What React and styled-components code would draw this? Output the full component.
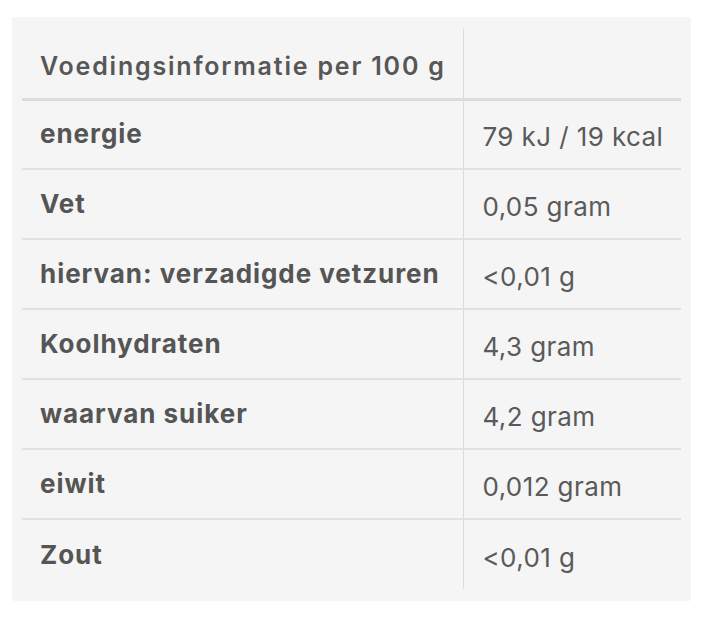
import React from 'react';
import styled, { createGlobalStyle } from 'styled-components';

const GlobalStyle = createGlobalStyle`
  html, body {
    margin: 0;
    padding: 0;
    background: #ffffff;
  }
  body {
    font-family: Inter, "Liberation Sans", Arial, sans-serif;
  }
`;

const rows = [
  ['energie', '79 kJ / 19 kcal'],
  ['Vet', '0,05 gram'],
  ['hiervan: verzadigde vetzuren', '<0,01 g'],
  ['Koolhydraten', '4,3 gram'],
  ['waarvan suiker', '4,2 gram'],
  ['eiwit', '0,012 gram'],
  ['Zout', '<0,01 g'],
];

const Page = styled.div`
  padding: 17px 29px 32px 12px;
`;

const Card = styled.div`
  background: #f5f5f5;
  border-radius: 3px;
  padding: 11px 10px 12px 10px;
`;

const Table = styled.table`
  width: 100%;
  border-collapse: collapse;
  table-layout: fixed;
`;

const HeadCell = styled.th`
  box-sizing: border-box;
  height: 71px;
  padding: 6px 0 0 18px;
  text-align: left;
  font-size: 25px;
  font-weight: 600;
  letter-spacing: 1.8px;
  white-space: nowrap;
  color: #575757;
  border-bottom: 3px solid #dcdcdc;
  border-right: ${p => (p.$divider ? '1px solid #dcdcdc' : 'none')};
  width: ${p => p.$width || 'auto'};
`;

const Row = styled.tr`
  border-bottom: ${p => (p.$last ? 'none' : '2px solid #e1e1e1')};
`;

const Label = styled.td`
  box-sizing: border-box;
  height: 70px;
  padding: 0 0 1px 18px;
  font-size: 26px;
  font-weight: 700;
  letter-spacing: 0.95px;
  white-space: nowrap;
  color: #555555;
  border-right: 1px solid #dcdcdc;
  vertical-align: middle;
`;

const Value = styled.td`
  box-sizing: border-box;
  padding: 5px 0 0 19px;
  font-size: 26px;
  font-weight: 400;
  letter-spacing: 0.4px;
  white-space: nowrap;
  color: #5a5a5a;
  vertical-align: middle;
`;

export default function App() {
  return (
    <Page>
      <GlobalStyle />
      <Card>
        <Table>
          <thead>
            <tr>
              <HeadCell $divider $width="441px">Voedingsinformatie per 100 g</HeadCell>
              <HeadCell />
            </tr>
          </thead>
          <tbody>
            {rows.map(([label, value], i) => (
              <Row key={label} $last={i === rows.length - 1}>
                <Label>{label}</Label>
                <Value>{value}</Value>
              </Row>
            ))}
          </tbody>
        </Table>
      </Card>
    </Page>
  );
}
